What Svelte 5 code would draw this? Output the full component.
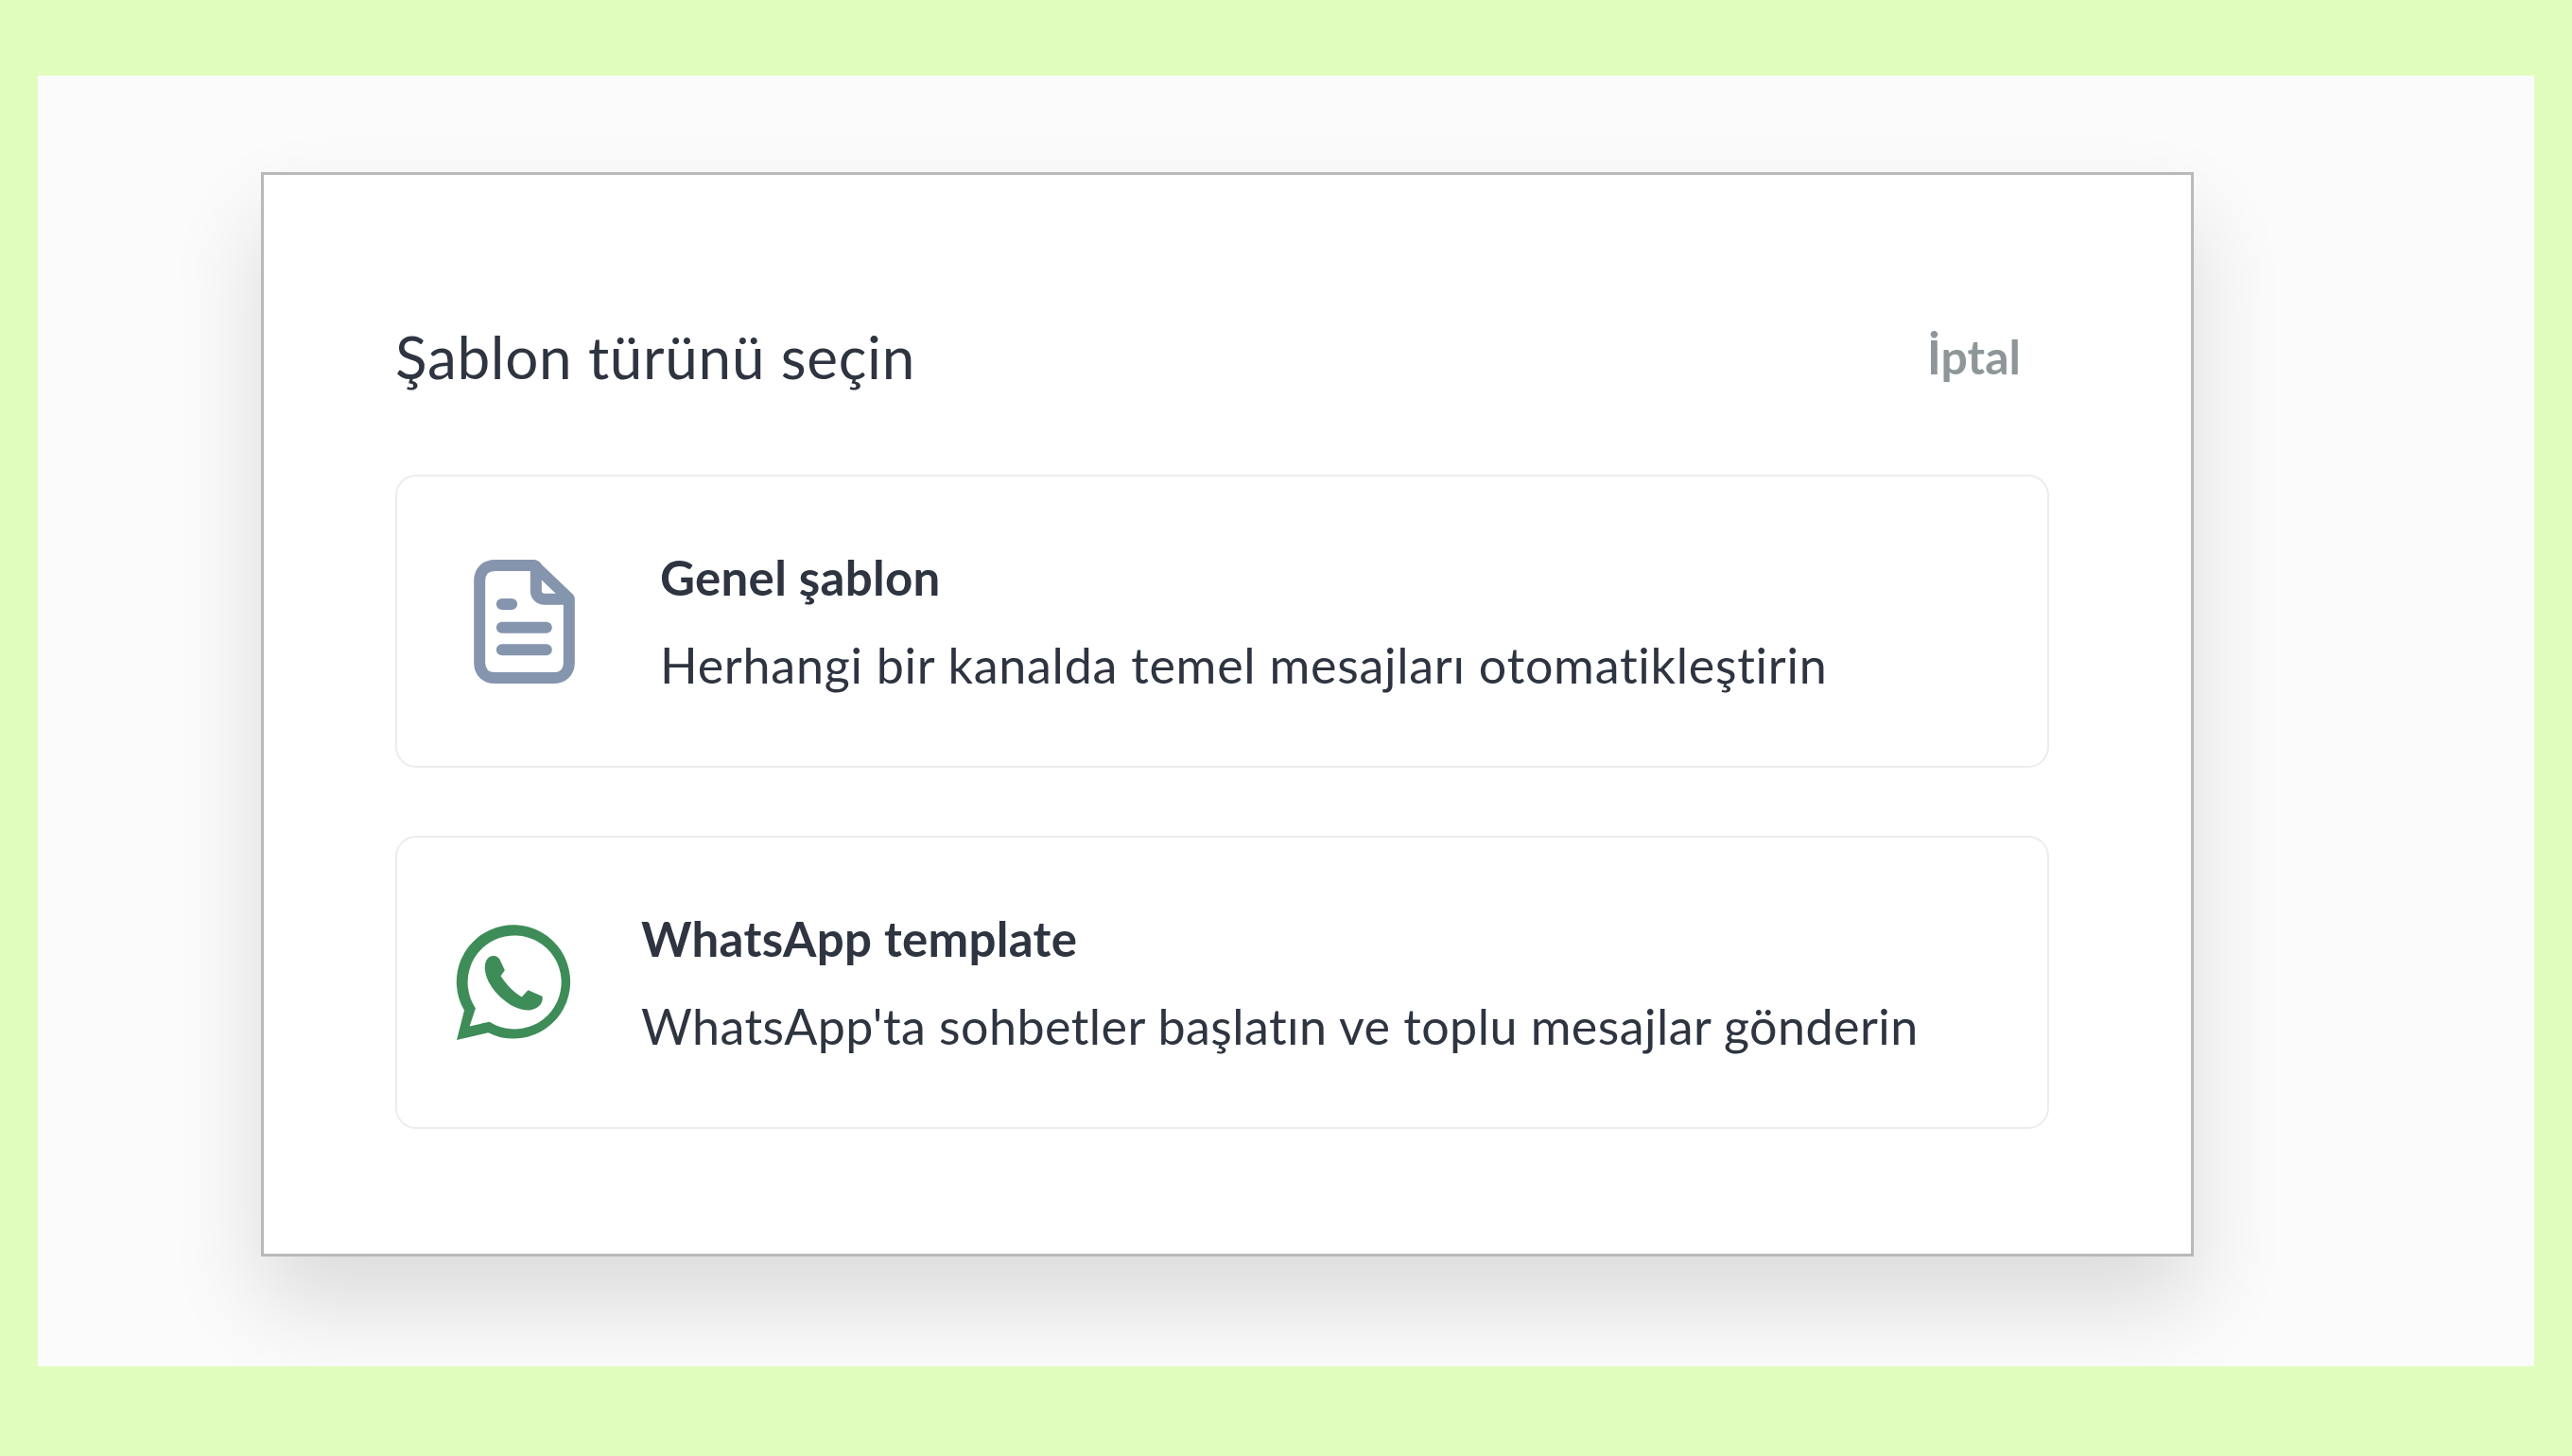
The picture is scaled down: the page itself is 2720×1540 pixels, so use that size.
<script>
  const templates = [
    {
      id: 'general',
      title: 'Genel şablon',
      description: 'Herhangi bir kanalda temel mesajları otomatikleştirin'
    },
    {
      id: 'whatsapp',
      title: 'WhatsApp template',
      description: "WhatsApp'ta sohbetler başlatın ve toplu mesajlar gönderin"
    }
  ];
</script>

<div class="page">
  <div class="panel">
    <div class="modal">
      <header class="modal-header">
        <h2>Şablon türünü seçin</h2>
        <button class="cancel">İptal</button>
      </header>

      {#each templates as t}
        <div class="card {t.id}">
          {#if t.id === 'general'}
            <svg class="icon" viewBox="183 157 320 393" width="107" height="131" fill="none" stroke="#8595ae" stroke-width="36" stroke-linecap="round" stroke-linejoin="round">
              <path d="M375 175H250C220 175 201 194 201 224V483C201 513 220 532 250 532H435C465 532 485 513 485 483V280Z" />
              <path d="M380 178V255C380 272 392 282 408 282H482" />
              <path d="M272 298H303M272 372H413M272 443H413" />
            </svg>
          {:else}
            <svg class="icon" viewBox="125 105 370 370" width="123" height="123" fill="#3e8c58">
              <path fill-rule="evenodd" d="M128 472L152 378A181 181 0 1 1 228 449ZM169 428L188 371A149 149 0 1 1 232 414Z" />
              <path d="M232 208C245 200 262 205 268 222L281 250L268 268C285 295 310 320 335 335L355 313L400 333C405 352 390 372 360 377C300 380 225 310 218 250C216 232 220 216 232 208Z" />
            </svg>
          {/if}
          <div class="text">
            <h3>{t.title}</h3>
            <p>{t.description}</p>
          </div>
        </div>
      {/each}
    </div>
  </div>
</div>

<style>
  :global(body) {
    margin: 0;
    background: #e0fdbd;
  }

  .page {
    width: 2720px;
    height: 1540px;
    padding: 80px 40px 95px;
    box-sizing: border-box;
    font-family: "Lato", "Noto Sans", sans-serif;
    color: #2e3440;
  }

  .panel {
    height: 100%;
    background: #fbfbfb;
    padding: 102px 360px 0 236px;
    box-sizing: border-box;
    overflow: hidden;
  }

  .modal {
    width: 2044px;
    height: 1147px;
    box-sizing: border-box;
    background: #fff;
    border: 3px solid #b9b9b9;
    padding: 0 150px 0 139px;
    box-shadow: 0 50px 90px rgba(0, 0, 0, 0.13);
  }

  .modal-header {
    display: flex;
    justify-content: space-between;
    align-items: center;
    height: 317px;
    padding: 66px 30px 0 0;
    box-sizing: border-box;
  }

  h2 {
    margin: 0;
    font-size: 62px;
    font-weight: 400;
    letter-spacing: 0.7px;
  }

  .cancel {
    border: 0;
    background: none;
    padding: 0;
    font: inherit;
    font-size: 50px;
    font-weight: 700;
    color: #8f9699;
  }

  .card {
    height: 310px;
    box-sizing: border-box;
    display: flex;
    align-items: center;
    border: 2px solid #ececec;
    border-radius: 22px;
    margin-bottom: 72px;
    background: #fff;
  }

  .card.general {
    padding-left: 81px;
    gap: 90px;
  }

  .card.whatsapp {
    padding-left: 62px;
    gap: 73px;
  }

  .icon {
    flex: none;
  }

  h3 {
    margin: 0 0 34px;
    font-size: 51px;
    line-height: 58px;
    font-weight: 700;
    letter-spacing: 0.3px;
  }

  p {
    margin: 0;
    font-size: 52px;
    line-height: 58px;
    letter-spacing: 0.75px;
  }

  .whatsapp p {
    letter-spacing: 0.45px;
  }
</style>
